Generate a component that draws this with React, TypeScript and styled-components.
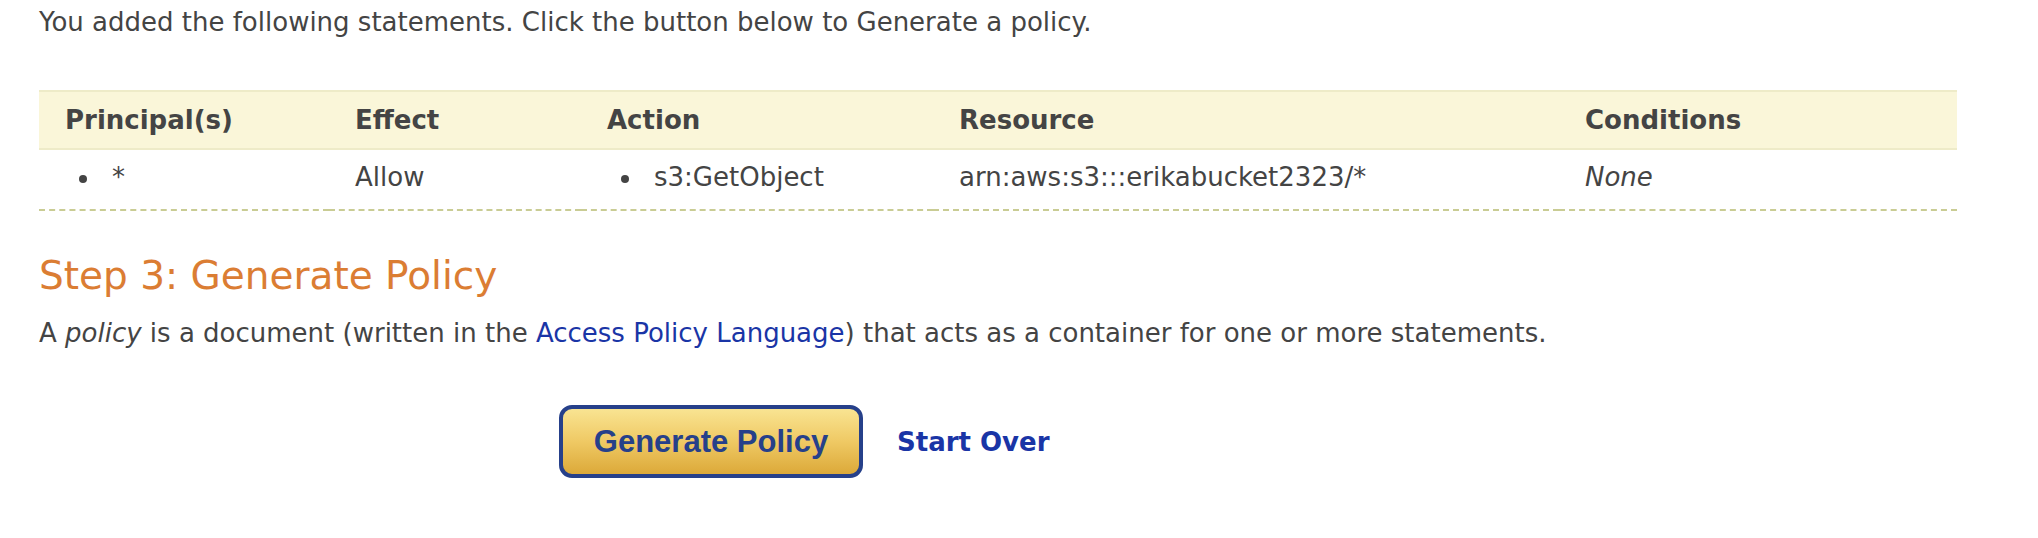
import React from "react";
import styled, { createGlobalStyle } from "styled-components";

const GlobalStyle = createGlobalStyle`
  html, body {
    margin: 0;
    padding: 0;
    background: #ffffff;
  }
  body {
    font-family: "DejaVu Sans", Verdana, sans-serif;
    color: #444444;
  }
`;

const Page = styled.div`
  padding: 0 81px 0 39px;
`;

const Intro = styled.p`
  margin: 0;
  padding-top: 6px;
  font-size: 26px;
  line-height: 32px;
`;

const Table = styled.div`
  margin-top: 52px;
  display: grid;
  grid-template-columns: 290px 252px 352px 626px 1fr;
`;

const HeadCell = styled.div`
  background: #faf6d9;
  border-top: 2px solid #eeebc8;
  border-bottom: 2px solid #eeebc8;
  padding: 0 0 0 26px;
  height: 56px;
  display: flex;
  align-items: center;
  font-weight: bold;
  font-size: 26px;
`;

const Cell = styled.div<{ $italic?: boolean }>`
  border-bottom: 2px dashed #c9cc94;
  padding: 0 0 5px 26px;
  height: 54px;
  display: flex;
  align-items: center;
  font-size: 26px;
  font-style: ${(p) => (p.$italic ? "italic" : "normal")};
`;

const Bullets = styled.ul`
  margin: 0;
  padding-left: 14px;
  list-style: none;
`;

const Bullet = styled.li`
  display: flex;
  align-items: center;

  &::before {
    content: "";
    width: 8px;
    height: 8px;
    border-radius: 50%;
    background: #444444;
    margin: 4px 25px 0 0;
  }
`;

const Heading = styled.h2`
  margin: 41px 0 0;
  font-size: 39px;
  font-weight: normal;
  line-height: 48px;
  color: #db7d33;
`;

const Text = styled.p`
  margin: 16px 0 0;
  font-size: 26px;
  line-height: 34px;

  em {
    font-style: italic;
  }

  a {
    color: #1a35a6;
    text-decoration: none;
  }
`;

const Actions = styled.div`
  margin: 55px 0 0 520px;
  display: flex;
  align-items: center;
  gap: 34px;
`;

const GenerateButton = styled.button`
  width: 304px;
  height: 73px;
  border: 4px solid #26408a;
  border-radius: 13px;
  background: linear-gradient(to bottom, #f9e492 0%, #efc964 50%, #dca939 100%);
  color: #26408a;
  font-family: "Liberation Sans", Arial, sans-serif;
  font-weight: bold;
  font-size: 31px;
  cursor: pointer;
  padding: 0;
`;

const StartOver = styled.a`
  color: #1a35a6;
  font-family: "DejaVu Sans", Verdana, sans-serif;
  font-weight: bold;
  font-size: 26px;
  text-decoration: none;
  cursor: pointer;
`;

const columns = ["Principal(s)", "Effect", "Action", "Resource", "Conditions"];

export default function App() {
  return (
    <Page>
      <GlobalStyle />
      <Intro>
        You added the following statements. Click the button below to Generate a policy.
      </Intro>
      <Table>
        {columns.map((c) => (
          <HeadCell key={c}>{c}</HeadCell>
        ))}
        <Cell>
          <Bullets>
            <Bullet>*</Bullet>
          </Bullets>
        </Cell>
        <Cell>Allow</Cell>
        <Cell>
          <Bullets>
            <Bullet>s3:GetObject</Bullet>
          </Bullets>
        </Cell>
        <Cell>arn:aws:s3:::erikabucket2323/*</Cell>
        <Cell $italic>None</Cell>
      </Table>
      <Heading>Step 3: Generate Policy</Heading>
      <Text>
        A <em>policy</em> is a document (written in the <a>Access Policy Language</a>) that
        acts as a container for one or more statements.
      </Text>
      <Actions>
        <GenerateButton>Generate Policy</GenerateButton>
        <StartOver>Start Over</StartOver>
      </Actions>
    </Page>
  );
}
